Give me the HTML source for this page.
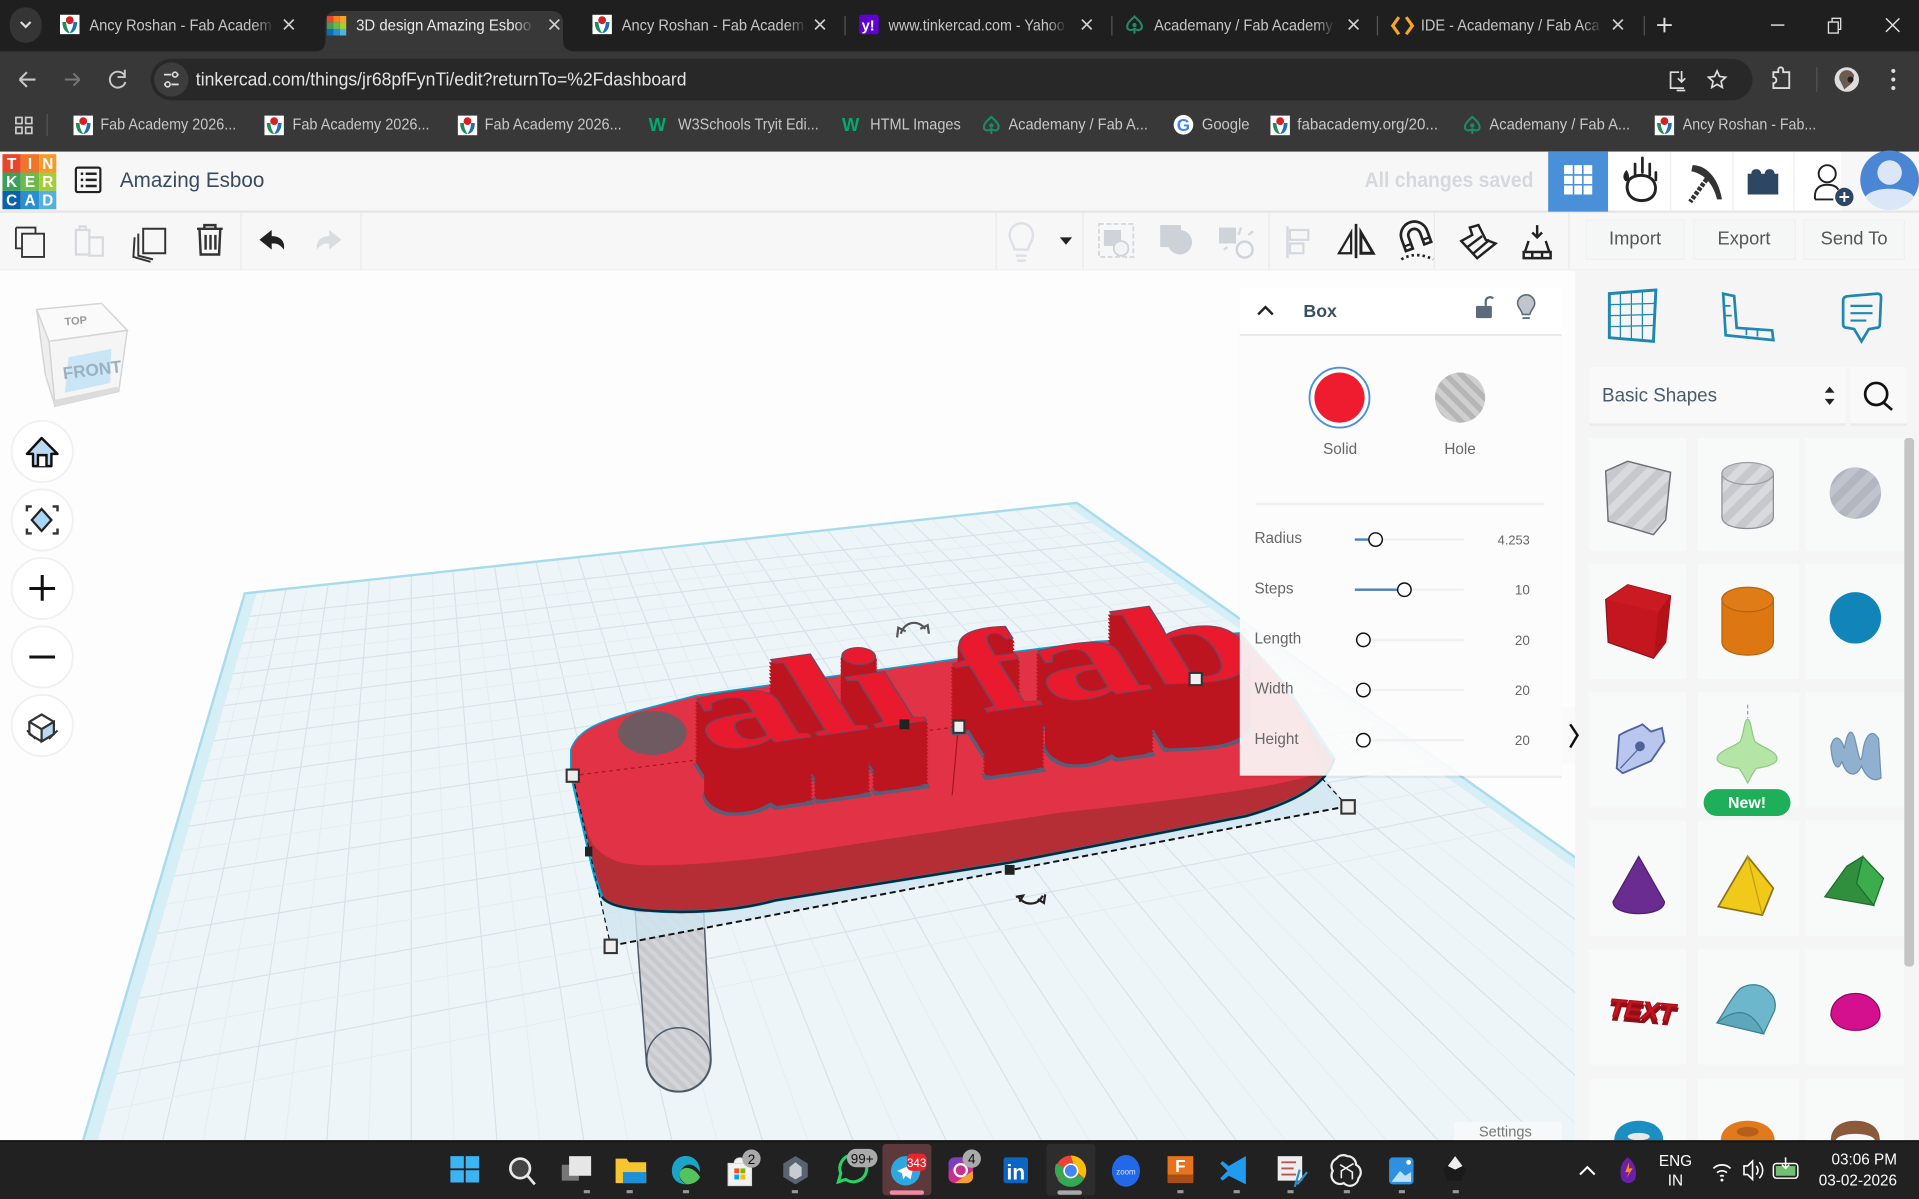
<!DOCTYPE html>
<html lang="en"><head><meta charset="utf-8"><title>3D design Amazing Esboo | Tinkercad</title>
<style>
html,body{margin:0;padding:0;background:#202020;overflow:hidden}
svg{display:block}
text{font-family:"Liberation Sans",sans-serif}
.tab{font-size:13px;fill:#c4c7c5}
.bm{font-size:12.5px;fill:#c7c7c7}
.x{stroke:#d0d0d0;stroke-width:1.4;fill:none}
.lab{font-size:12.5px;fill:#666}
.val{font-size:11px;fill:#666;text-anchor:end}
.btn{font-size:15px;fill:#555;text-anchor:middle}
.ic{fill:none;stroke:#222;stroke-width:2;stroke-linejoin:round;stroke-linecap:round}
.ext{font-family:"Liberation Serif",serif;font-weight:bold;font-size:100px;fill:#bd1520;stroke:#bd1520;stroke-width:1.5}
.nb{fill:#fff;stroke:#f0f0f0;stroke-width:1.5}
.cell{fill:#f8f9f9}
.tb{font-size:12.5px;fill:#fff}
</style></head><body>
<svg xmlns="http://www.w3.org/2000/svg" width="1919" height="1199" viewBox="0 0 1568 980" preserveAspectRatio="none">
<defs>
<symbol id="fab" viewBox="0 0 16 16"><rect width="16" height="16" fill="#fff"/><circle cx="8" cy="4.5" r="3.2" fill="#d32027"/><path d="M2 6C2 12 5 15 8 15C6 12 5 9 5 6Z" fill="#1f8a5a"/><path d="M14 6C14 12 11 15 8 15C10 12 11 9 11 6Z" fill="#1c6fb5"/></symbol>
<symbol id="aca" viewBox="0 0 16 16"><path d="M8 1C5 4 2 6 2 9.500C2 12 5 13 8 11C11 13 14 12 14 9.500C14 6 11 4 8 1Z M8 11V15" fill="none" stroke="#1d8a66" stroke-width="1.700"/><circle cx="8" cy="8" r="1.800" fill="#1d8a66"/></symbol>
<symbol id="tk" viewBox="0 0 15 15"><rect width="5" height="5" fill="#e8462a"/><rect x="5" width="5" height="5" fill="#f58220"/><rect x="10" width="5" height="5" fill="#f7a128"/><rect y="5" width="5" height="5" fill="#3f9f5a"/><rect x="5" y="5" width="5" height="5" fill="#6cba4a"/><rect x="10" y="5" width="5" height="5" fill="#a5cd39"/><rect y="10" width="5" height="5" fill="#0a6ebd"/><rect x="5" y="10" width="5" height="5" fill="#2a8fd0"/><rect x="10" y="10" width="5" height="5" fill="#55b0e0"/></symbol>
<pattern id="hs" width="13" height="13" patternUnits="userSpaceOnUse" patternTransform="rotate(45)"><rect width="13" height="13" fill="#c5c8cc"/><rect width="6.500" height="13" fill="#d8dadd"/></pattern>
<pattern id="hd" width="9" height="9" patternUnits="userSpaceOnUse" patternTransform="rotate(-45)"><rect width="9" height="9" fill="#b5b5b5"/><rect width="4.500" height="9" fill="#cfcfcf"/></pattern>
<pattern id="hc" width="7" height="7" patternUnits="userSpaceOnUse" patternTransform="rotate(-45)"><rect width="7" height="7" fill="#c6c8cc"/><rect width="3.500" height="7" fill="#d2d4d7"/></pattern>
<linearGradient id="fd"><stop offset="0" stop-color="#1f1f1f" stop-opacity="0"/><stop offset="1" stop-color="#1f1f1f"/></linearGradient>
<linearGradient id="fa"><stop offset="0" stop-color="#383838" stop-opacity="0"/><stop offset="1" stop-color="#383838"/></linearGradient>
<clipPath id="plane"><path d="M200 485L880 411L1614 932H68Z"/></clipPath>
<clipPath id="canvas"><rect x="0" y="221" width="1287" height="711"/></clipPath>
</defs>

<!-- browser chrome -->
<rect width="1568" height="42" fill="#1f1f1f"/>
<rect y="42" width="1568" height="82" fill="#383838"/>
<rect x="8" y="6" width="26" height="29" rx="13" fill="#353535"/>
<path d="M17 18l4 4 4-4" fill="none" stroke="#ddd" stroke-width="1.800"/>
<path d="M258 42C264 42 266 38 266 32V18C266 12 270 9 276 9H450C456 9 460 12 460 18V32C460 38 462 42 470 42Z" fill="#383838"/>

<use href="#fab" x="49" y="12" width="16" height="16"/>
<text x="73" y="25" class="tab" textLength="149" lengthAdjust="spacingAndGlyphs">Ancy Roshan - Fab Academ</text><rect x="208" y="12" width="16" height="18" fill="url(#fd)"/>
<path class="x" d="M232 16l8 8M240 16l-8 8"/>
<use href="#tk" x="267" y="13" width="16" height="16"/>
<text x="291" y="25" class="tab" style="fill:#e8e8e8" textLength="143" lengthAdjust="spacingAndGlyphs">3D design Amazing Esboo</text><rect x="420" y="12" width="16" height="18" fill="url(#fa)"/>
<path class="x" d="M449 16l8 8M457 16l-8 8"/>
<use href="#fab" x="484" y="12" width="16" height="16"/>
<text x="508" y="25" class="tab" textLength="149" lengthAdjust="spacingAndGlyphs">Ancy Roshan - Fab Academ</text><rect x="643" y="12" width="16" height="18" fill="url(#fd)"/>
<path class="x" d="M666 16l8 8M674 16l-8 8"/>
<rect x="690" y="13" width="1" height="16" fill="#555"/>
<rect x="702" y="12" width="16" height="16" rx="2" fill="#5f01d1"/><text x="704" y="25" style="font-size:12px;font-weight:bold;fill:#fff">y!</text>
<text x="726" y="25" class="tab" textLength="144" lengthAdjust="spacingAndGlyphs">www.tinkercad.com - Yahoo</text><rect x="856" y="12" width="16" height="18" fill="url(#fd)"/>
<path class="x" d="M884 16l8 8M892 16l-8 8"/>
<rect x="908" y="13" width="1" height="16" fill="#555"/>
<use href="#aca" x="919" y="12" width="16" height="17"/>
<text x="943" y="25" class="tab" textLength="146" lengthAdjust="spacingAndGlyphs">Academany / Fab Academy</text><rect x="1075" y="12" width="16" height="18" fill="url(#fd)"/>
<path class="x" d="M1102 16l8 8M1110 16l-8 8"/>
<rect x="1125" y="13" width="1" height="16" fill="#555"/>
<path d="M1143 14l-5 7 5 7M1149 14l5 7-5 7" fill="none" stroke="#f5a623" stroke-width="2.600"/>
<text x="1161" y="25" class="tab" textLength="146" lengthAdjust="spacingAndGlyphs">IDE - Academany / Fab Aca</text><rect x="1293" y="12" width="16" height="18" fill="url(#fd)"/>
<path class="x" d="M1318 16l8 8M1326 16l-8 8"/>
<rect x="1343" y="13" width="1" height="16" fill="#555"/>
<path d="M1354 20.500h12M1360 14.500v12" stroke="#ddd" stroke-width="1.600"/>
<path d="M1447 20.500h11" stroke="#ddd" stroke-width="1.200"/>
<path d="M1494 18h8v9h-8zM1497 18v-3h7v9h-2" fill="none" stroke="#ddd" stroke-width="1.100"/>
<path d="M1541 15l11 11M1552 15l-11 11" stroke="#ddd" stroke-width="1.200"/>

<path d="M16 65h13M16 65l6-6M16 65l6 6" stroke="#c7c7c7" stroke-width="1.700" fill="none"/>
<path d="M53 65h12M65 65l-5-5M65 65l-5 5" stroke="#777" stroke-width="1.600" fill="none"/>
<path d="M102 62a6.500 6.500 0 1 0 .5 5M102 57v6h-6" stroke="#c7c7c7" stroke-width="1.600" fill="none"/>
<rect x="123" y="48" width="1309" height="34" rx="17" fill="#282828"/>
<circle cx="140" cy="65" r="14" fill="#3d3d3d"/>
<path d="M134 61h6M145 61h1M134 69h1M140 69h6" stroke="#ddd" stroke-width="1.500"/><circle cx="143" cy="61" r="2" fill="none" stroke="#ddd" stroke-width="1.300"/><circle cx="137" cy="69" r="2" fill="none" stroke="#ddd" stroke-width="1.300"/>
<text x="160" y="70" style="font-size:15px;fill:#e4e4e4" textLength="401" lengthAdjust="spacingAndGlyphs">tinkercad.com/things/jr68pfFynTi/edit?returnTo=%2Fdashboard</text>
<path d="M1376 72h-11v-13h7M1370 74h7M1374 58v9M1371 64l3 3 3-3" fill="none" stroke="#ddd" stroke-width="1.400"/>
<path d="M1403 58l2 4.500 5 .6-3.700 3.400 1 5-4.300-2.500-4.300 2.500 1-5-3.700-3.400 5-.6z" fill="none" stroke="#ddd" stroke-width="1.400"/>
<path d="M1449 59h4v-2a2 2 0 0 1 4 0v2h5v13h-13v-4a2.500 2.500 0 0 0 0-5z" fill="none" stroke="#ddd" stroke-width="1.500"/>
<rect x="1484" y="55" width="1" height="20" fill="#555"/>
<circle cx="1509" cy="65" r="10" fill="#ddd"/><path d="M1503 65a6 6 0 0 1 12-3l-2 6-6 5z" fill="#6b5a50"/><circle cx="1512" cy="65" r="2.500" fill="#222"/>
<circle cx="1547" cy="58" r="1.700" fill="#ddd"/><circle cx="1547" cy="65" r="1.700" fill="#ddd"/><circle cx="1547" cy="72" r="1.700" fill="#ddd"/>

<path d="M13 96h5v5h-5zM21 96h5v5h-5zM13 104h5v5h-5zM21 104h5v5h-5z" fill="none" stroke="#ccc" stroke-width="1.400"/>
<rect x="38" y="93" width="1" height="18" fill="#555"/>
<use href="#fab" x="60" y="94" width="16" height="17"/><text x="82" y="106" class="bm" textLength="111" lengthAdjust="spacingAndGlyphs">Fab Academy 2026...</text>
<use href="#fab" x="216" y="94" width="16" height="17"/><text x="239" y="106" class="bm" textLength="112" lengthAdjust="spacingAndGlyphs">Fab Academy 2026...</text>
<use href="#fab" x="374" y="94" width="16" height="17"/><text x="396" y="106" class="bm" textLength="112" lengthAdjust="spacingAndGlyphs">Fab Academy 2026...</text>
<text x="530" y="107" style="font-size:15px;font-weight:bold;fill:#04aa6d">W</text><text x="554" y="106" class="bm" textLength="115" lengthAdjust="spacingAndGlyphs">W3Schools Tryit Edi...</text>
<text x="688" y="107" style="font-size:15px;font-weight:bold;fill:#04aa6d">W</text><text x="711" y="106" class="bm" textLength="74" lengthAdjust="spacingAndGlyphs">HTML Images</text>
<use href="#aca" x="802" y="94" width="16" height="17"/><text x="824" y="106" class="bm" textLength="114" lengthAdjust="spacingAndGlyphs">Academany / Fab A...</text>
<circle cx="967" cy="102" r="8" fill="#fff"/><text x="961.500" y="107" style="font-size:14px;font-weight:bold;fill:#4285f4">G</text><text x="982" y="106" class="bm" textLength="39" lengthAdjust="spacingAndGlyphs">Google</text>
<use href="#fab" x="1038" y="94" width="16" height="17"/><text x="1060" y="106" class="bm" textLength="115" lengthAdjust="spacingAndGlyphs">fabacademy.org/20...</text>
<use href="#aca" x="1195" y="94" width="16" height="17"/><text x="1217" y="106" class="bm" textLength="115" lengthAdjust="spacingAndGlyphs">Academany / Fab A...</text>
<use href="#fab" x="1352" y="94" width="16" height="17"/><text x="1375" y="106" class="bm" textLength="109" lengthAdjust="spacingAndGlyphs">Ancy Roshan - Fab...</text>

<!-- tinkercad header -->
<rect y="124" width="1568" height="808" fill="#fdfdfd"/>
<rect y="124" width="1568" height="48" fill="#f7f7f8"/>
<rect y="172" width="1568" height="2" fill="#e6e6e6"/>
<rect y="174" width="1568" height="47" fill="#f7f7f8"/>
<rect y="220" width="1568" height="1" fill="#eee"/>
<g style="font-size:12.500px;font-weight:bold;fill:#fff;text-anchor:middle">
<rect x="2" y="126" width="15" height="15" fill="#e8462a"/><text x="9.500" y="138">T</text>
<rect x="17" y="126" width="15" height="15" fill="#f0752a"/><text x="24.500" y="138">I</text>
<rect x="32" y="126" width="14" height="15" fill="#f79a2a"/><text x="39" y="138">N</text>
<rect x="2" y="141" width="15" height="15" fill="#3f9f5a"/><text x="9.500" y="153">K</text>
<rect x="17" y="141" width="15" height="15" fill="#6cba4a"/><text x="24.500" y="153">E</text>
<rect x="32" y="141" width="14" height="15" fill="#a5cd39"/><text x="39" y="153">R</text>
<rect x="2" y="156" width="15" height="15" fill="#0a62ad"/><text x="9.500" y="168">C</text>
<rect x="17" y="156" width="15" height="15" fill="#2a8fd0"/><text x="24.500" y="168">A</text>
<rect x="32" y="156" width="14" height="15" fill="#55b0e0"/><text x="39" y="168">D</text>
</g>
<rect x="62" y="137" width="20" height="20" rx="1.500" fill="none" stroke="#222" stroke-width="1.800"/>
<path d="M66 142h2M70 142h9M66 147h2M70 147h9M66 152h2M70 152h9" stroke="#222" stroke-width="2"/>
<text x="98" y="153" style="font-size:17px;fill:#3a4a5c" textLength="118" lengthAdjust="spacingAndGlyphs">Amazing Esboo</text>
<text x="1115" y="153" style="font-size:17px;font-weight:bold;fill:#d5d9dd" textLength="138" lengthAdjust="spacingAndGlyphs">All changes saved</text>
<rect x="1265" y="124" width="49" height="49" fill="#4a90d9"/>
<path d="M1278 135h23v24h-23z" fill="#fff"/><path d="M1285.700 135v24M1293.300 135v24M1278 143h23M1278 151h23" stroke="#4a90d9" stroke-width="1.300"/>
<rect x="1314" y="124" width="190" height="48" fill="#fff"/>
<path d="M1365 124v48M1416 124v48M1466 124v48" stroke="#eee"/>
<path d="M1331 147C1328 153 1329 163 1341 164C1352 164 1355 155 1351 148C1347 142 1336 142 1331 147Z" fill="none" stroke="#222" stroke-width="2.400"/>
<path d="M1336 142v-8M1342 141v-12M1348 143v-9M1353 147v-6" fill="none" stroke="#222" stroke-width="2.200" stroke-linecap="round"/><path d="M1328 148c-3-3-1-7 1-9 2 3 3 6 1 9z" fill="#222"/>
<path d="M1383 135C1394 135 1404 145 1407 163L1403 163C1400 150 1392 142 1382 140Z" fill="#333"/><path d="M1397 143L1381 165" stroke="#333" stroke-width="3.800" stroke-dasharray="3 1.200"/>
<path d="M1431 142c0-5 8-5 8 0h3c0-5 8-5 8 0h3v17h-25v-17z" fill="#2d4663"/>
<circle cx="1493" cy="142" r="7" fill="none" stroke="#222" stroke-width="1.600"/><path d="M1483 163v-3c0-6 4-9 10-9s8 2 9 4M1483 163h15" fill="none" stroke="#222" stroke-width="1.600"/>
<circle cx="1507" cy="161" r="7.500" fill="#2d4663"/><path d="M1503 161h8M1507 157v8" stroke="#fff" stroke-width="1.600"/>
<circle cx="1544" cy="147" r="24" fill="#4a86d4"/><circle cx="1544" cy="141" r="10" fill="#dbe7f7"/><path d="M1524 161c6-9 34-9 40 0a24 24 0 0 1-40 0Z" fill="#dbe7f7"/>

<!-- edit toolbar -->
<path d="M197 174v47M295 174v47M814 174v47M885 174v47M1037 174v47M1172 174v47M1282 174v47" stroke="#eaeaea"/>
<path d="M13 186h16v5M18 191h18v19H18zM13 186v17h5" fill="none" stroke="#333" stroke-width="1.500"/>
<path d="M62 188h11v20H62zM73 194h11v15H73zM65 188v-3h5v3" fill="none" stroke="#d6dade" stroke-width="1.800"/>
<path d="M117 187h18v20h-18zM113 191v18l12 3M110 194l-1 16 14 4" fill="none" stroke="#333" stroke-width="1.600"/>
<path d="M161 187h21M167 187v-3h9v3M163 187l1 21h15l1-21M168 192v12M172 192v12M176 192v12" fill="none" stroke="#333" stroke-width="2"/>
<path d="M212 196l10-8v5C230 193 233 198 232 204C228 199 226 199 222 199v5Z" fill="#222"/>
<path d="M279 196l-10-8v5C261 193 258 198 259 204C263 199 265 199 269 199v5Z" fill="#d9dde2"/>

<path d="M830 209h9M831 213h7M829 204C828 199 825 197 825 192A9.500 9.500 0 0 1 844 192C844 197 841 199 840 204Z" fill="none" stroke="#dde0e6" stroke-width="2"/>
<path d="M866 194h10l-5 6z" fill="#222"/>
<rect x="898" y="183" width="28" height="27" fill="none" stroke="#d5d8dc" stroke-width="1.500" stroke-dasharray="4 2"/><rect x="902" y="188" width="14" height="13" fill="#cfd4da"/><circle cx="916" cy="203" r="6" fill="#f2f3f4" stroke="#cfd4da" stroke-width="1.500"/>
<rect x="948" y="184" width="17" height="18" fill="#ccd2d8"/><circle cx="964" cy="198" r="10" fill="#ccd2d8"/>
<rect x="996" y="186" width="14" height="13" fill="#cfd4da"/><circle cx="1017" cy="204" r="6.500" fill="none" stroke="#cfd4da" stroke-width="2"/><path d="M1014 186l-2 6M1020 192l4-3M1000 204l3-2" stroke="#d5d8dc" stroke-width="2"/>
<path d="M1052 185v26" stroke="#d5d8dc" stroke-width="2"/><path d="M1054 188h15v8h-15zM1054 199h11v8h-11z" fill="none" stroke="#d5d8dc" stroke-width="1.800"/>
<path d="M1108 183v28" stroke="#222" stroke-width="2.200"/><path d="M1104 190v17h-10z" fill="none" stroke="#222" stroke-width="1.800"/><path d="M1112 190v17h10z" fill="none" stroke="#222" stroke-width="2.400"/>
<g transform="translate(1156,193) rotate(-20)"><path d="M-11 9V-1A11 11 0 0 1 11 -1V9H5V-1A5 5 0 0 0 -5 -1V9Z" fill="none" stroke="#222" stroke-width="2.200"/><path d="M-11 5h6M5 5h6" stroke="#222" stroke-width="1.800"/></g>
<path d="M1145 212q12-7 26 0" fill="none" stroke="#222" stroke-width="2.200" stroke-dasharray="2 2.500"/>
<path d="M1201 186l7-2 6 12 8 3-15 12-13-14 9-5zM1199 202l12-9M1204 207l13-11" fill="none" stroke="#222" stroke-width="2"/>
<path d="M1256 184v10M1252 190l4 4 4-4M1249 197l-3 9h20l-3-9M1245 206h22v5h-22zM1252 206v5M1260 206v5" fill="none" stroke="#222" stroke-width="2"/>

<rect x="1296" y="180" width="80" height="32" fill="#f5f6f6" stroke="#f0f0f0"/><text x="1336" y="200" class="btn">Import</text>
<rect x="1384" y="180" width="83" height="32" fill="#f5f6f6" stroke="#f0f0f0"/><text x="1425" y="200" class="btn">Export</text>
<rect x="1474" y="180" width="82" height="32" fill="#f5f6f6" stroke="#f0f0f0"/><text x="1515" y="200" class="btn">Send To</text>

<!-- work plane -->
<g clip-path="url(#canvas)">
<path d="M200 485L880 411L1614 932H68Z" fill="#eef5f9"/>
<g clip-path="url(#plane)">
<path fill="none" stroke="#e4edf2" stroke-width=".8" d="M336 25L100 932M336 25L166 932M336 25L233 932M336 25L301 932M336 25L371 932M336 25L441 932M336 25L513 932M336 25L586 932M336 25L660 932M336 25L735 932M336 25L812 932M336 25L890 932M336 25L970 932M336 25L1050 932M336 25L1133 932M336 25L1217 932M336 25L1302 932M336 25L1389 932M336 25L1478 932M336 25L1568 932"/>
<path fill="none" stroke="#d6e3ea" stroke-width="1" d="M336 25L133 932M336 25L200 932M336 25L267 932M336 25L336 932M336 25L406 932M336 25L477 932M336 25L549 932M336 25L623 932M336 25L697 932M336 25L773 932M336 25L851 932M336 25L930 932M336 25L1010 932M336 25L1091 932M336 25L1175 932M336 25L1259 932M336 25L1346 932M336 25L1433 932M336 25L1523 932"/>
<path fill="none" stroke="#d6e3ea" stroke-width="1" d="M4475 25L194 505M4475 25L188 527M4475 25L180 552M4475 25L173 578M4475 25L164 607M4475 25L154 640M4475 25L143 677M4475 25L131 718M4475 25L117 765M4475 25L102 818M4475 25L83 880"/>
<path fill="none" stroke="#e4edf2" stroke-width=".8" d="M4475 25L190 516M4475 25L184 540M4475 25L176 565M4475 25L168 592M4475 25L159 623M4475 25L148 658M4475 25L137 697M4475 25L124 741M4475 25L110 791M4475 25L92 849M4475 25L75 910"/>
<path d="M200 485L68 932H80L210 484Z" fill="#d6eef6"/>
<path d="M880 411L1614 932H1596L872 413Z" fill="#d6eef6"/>
</g>
<path d="M68 932L200 485L880 411L1300 710" fill="none" stroke="#a8dcec" stroke-width="2"/>

<!-- hole cylinder -->
<path d="M519 745L528 866A26 26 0 0 0 581 866L575 745Z" fill="url(#hc)" stroke="#4d5a6a" stroke-width="1.200"/>
<ellipse cx="554.500" cy="866" rx="26" ry="26" fill="url(#hc)" stroke="#4d5a6a" stroke-width="1.200"/>
<!-- projection shadow -->
<path d="M490 735L499 773L1101 659L1078 630Z" fill="#cfe6f0" opacity=".8"/>
<!-- base -->
<path d="M467 613C472 598 488 590 527 580L569 569L783 539L895 525L1013 518L1050 560L1090 620C1085 640 1060 655 1018 667L825 705L633 736C600 745 560 747 527 744C505 742 495 738 492 733C488 725 484 708 484 708L467 634Z" fill="#b52d35" stroke="#00a3d4" stroke-width="2.500"/>
<path d="M492 733C495 738 505 742 527 744C560 747 600 745 633 736L825 705L1018 667C1060 655 1085 640 1090 620" fill="none" stroke="#0c2a38" stroke-width="2"/>
<path d="M467 613C472 598 488 590 527 580L569 569L783 539L895 525L1013 518L1050 560L1082 630C1060 640 1000 650 868 664L633 700C600 704 540 710 513 706C498 704 484 695 480 680L467 634Z" fill="#e13345"/>
<ellipse cx="533" cy="599" rx="28" ry="18" fill="#6e5a60"/>
<path d="M468 634L783 594" stroke="#a8141f" stroke-width="1" stroke-dasharray="3 3"/>
<path d="M783 594L778 650" stroke="#a8141f" stroke-width="1"/>
<!-- extruded letters: real text layered -->
<g>
<text class="ext" style="stroke:#5a5d78;stroke-width:3" transform="translate(0,54) matrix(1.7,-.24,.56,.9,580,614)">ali fab</text>
<text class="ext" transform="translate(0,51) matrix(1.7,-.24,.56,.9,580,614)">ali fab</text>
<text class="ext" transform="translate(0,48) matrix(1.7,-.24,.56,.9,580,614)">ali fab</text>
<text class="ext" transform="translate(0,45) matrix(1.7,-.24,.56,.9,580,614)">ali fab</text>
<text class="ext" transform="translate(0,42) matrix(1.7,-.24,.56,.9,580,614)">ali fab</text>
<text class="ext" transform="translate(0,39) matrix(1.7,-.24,.56,.9,580,614)">ali fab</text>
<text class="ext" transform="translate(0,36) matrix(1.7,-.24,.56,.9,580,614)">ali fab</text>
<text class="ext" transform="translate(0,33) matrix(1.7,-.24,.56,.9,580,614)">ali fab</text>
<text class="ext" transform="translate(0,30) matrix(1.7,-.24,.56,.9,580,614)">ali fab</text>
<text class="ext" transform="translate(0,27) matrix(1.7,-.24,.56,.9,580,614)">ali fab</text>
<text class="ext" transform="translate(0,24) matrix(1.7,-.24,.56,.9,580,614)">ali fab</text>
<text class="ext" transform="translate(0,21) matrix(1.7,-.24,.56,.9,580,614)">ali fab</text>
<text class="ext" transform="translate(0,18) matrix(1.7,-.24,.56,.9,580,614)">ali fab</text>
<text class="ext" transform="translate(0,15) matrix(1.7,-.24,.56,.9,580,614)">ali fab</text>
<text class="ext" transform="translate(0,12) matrix(1.7,-.24,.56,.9,580,614)">ali fab</text>
<text class="ext" transform="translate(0,9) matrix(1.7,-.24,.56,.9,580,614)">ali fab</text>
<text class="ext" transform="translate(0,6) matrix(1.7,-.24,.56,.9,580,614)">ali fab</text>
<text class="ext" transform="translate(0,3) matrix(1.7,-.24,.56,.9,580,614)">ali fab</text>
<text class="ext" style="fill:#ea1a2e;stroke:#6a4a60;stroke-width:.8" transform="matrix(1.7,-.24,.56,.9,580,614)">ali fab</text>
</g>
<!-- selection -->
<path d="M499 773L1101 659" stroke="#111" stroke-width="1.600" stroke-dasharray="5 3"/>
<path d="M468 634L499 773" stroke="#111" stroke-width="1" stroke-dasharray="4 3"/>
<path d="M1080 636L1101 659" stroke="#111" stroke-width="1" stroke-dasharray="4 3"/>
<g fill="#eee" stroke="#333" stroke-width="1.700">
<rect x="463" y="629" width="10" height="10"/><rect x="1096" y="654" width="11" height="11"/><rect x="494" y="768" width="10" height="11"/><rect x="779" y="589" width="9" height="10"/><rect x="972" y="550" width="10" height="10"/>
</g>
<rect x="821" y="707" width="8" height="8" fill="#222"/><rect x="735" y="588" width="8" height="8" fill="#222"/><rect x="478" y="692" width="6" height="8" fill="#222"/>
<path d="M736 518C739 508 750 506 756 514M733 521l1-8 6 3M759 518l-1-7-6 3" fill="none" stroke="#555" stroke-width="1.800"/>
<path d="M832 733C838 741 848 740 852 732M830 733l6-1-3 5M854 731l-1 7-5-3" fill="none" stroke="#222" stroke-width="1.800"/>
</g>

<!-- view cube -->
<path d="M30 253L83 248L104 270L40 279Z" fill="#fafafa" stroke="#d5d5d5" stroke-width="1.200"/>
<path d="M40 279L104 270L97 320L45 332Z" fill="#f5f5f5" stroke="#d5d5d5" stroke-width="1.200"/>
<path d="M30 253L40 279L45 332L37 306Z" fill="#eee" stroke="#d5d5d5" stroke-width="1.200"/>
<path d="M45 332L97 320L96 316L44 327Z" fill="#dcdcdc"/>
<path d="M56 292L91 285L90 313L53 321Z" fill="#c9e5f6"/>
<text transform="translate(53,266) rotate(-5)" style="font-size:9px;font-weight:bold;fill:#9a9a9a">TOP</text>
<text transform="translate(52,310) rotate(-7)" style="font-size:14px;font-weight:bold;fill:#9db0bf">FRONT</text>

<circle class="nb" cx="34.500" cy="369" r="25"/><circle class="nb" cx="34.500" cy="425" r="25"/><circle class="nb" cx="34.500" cy="481" r="25"/><circle class="nb" cx="34.500" cy="537" r="25"/><circle class="nb" cx="34.500" cy="593" r="25"/>
<path d="M22 371L34 358L47 371H42V381H27V371Z" fill="#bcd9f3" stroke="#111" stroke-width="2" stroke-linejoin="round"/><path d="M31 381v-9h7v9" fill="#fff" stroke="#111" stroke-width="2"/>
<path d="M34 416L42 425L34 434L26 425Z" fill="#a9d6f7" stroke="#222" stroke-width="1.800"/>
<path d="M22 418v-4h4M43 414h4v4M47 432v4h-4M26 436h-4v-4" fill="none" stroke="#333" stroke-width="2"/>
<path d="M24 481h21M34.500 470v21" stroke="#111" stroke-width="2.500"/>
<path d="M24 537h21" stroke="#111" stroke-width="2.500"/>
<path d="M34 584L44 590V600L34 606L24 600V590ZM24 590L34 596L44 590M34 596V606" fill="#fff" stroke="#333" stroke-width="1.800" stroke-linejoin="round"/><path d="M34 596L44 590V600L34 606Z" fill="#b9daf3" stroke="#333" stroke-width="1.800"/><path d="M22 597l7 7M47 597l-7 7" stroke="#333" stroke-width="1.600"/>

<!-- right shapes panel -->
<rect x="1287" y="221" width="281" height="711" fill="#f5f5f6"/>
<path d="M1315 240L1353 237L1351 279L1315 276Z" fill="none" stroke="#1e88b0" stroke-width="2.400"/>
<path d="M1316 249l36-1M1316 258l36-1M1316 267l35-1M1324 240v37M1333 239v38M1342 239v39" stroke="#1e88b0" stroke-width="1"/>
<path d="M1408 240L1417 242L1419 268L1448 270L1449 278L1410 274Z" fill="none" stroke="#1e88b0" stroke-width="2.200"/>
<path d="M1409 250h5M1410 258h5M1427 269v5M1436 270v5" stroke="#1e88b0" stroke-width="1.400"/>
<path d="M1511 242L1534 240Q1537 240 1537 243L1536 265Q1536 268 1533 268L1527 269L1521 279L1515 269L1510 268Q1506 268 1506 265L1506 246Q1506 242 1511 242Z" fill="none" stroke="#1e88b0" stroke-width="2.200"/>
<path d="M1512 250h18M1512 256h18M1512 262h13" stroke="#1e88b0" stroke-width="1.800"/>

<rect x="1299" y="300" width="209" height="47" fill="#f9f9fa"/><path d="M1299 347h209" stroke="#eaeaea" stroke-width="2"/>
<text x="1309" y="328" style="font-size:15.500px;fill:#4b5b6a" textLength="94" lengthAdjust="spacingAndGlyphs">Basic Shapes</text>
<path d="M1491 321l4-5 4 5zM1491 326l4 5 4-5z" fill="#222"/>
<rect x="1512" y="300" width="46" height="47" fill="#f9f9fa"/><path d="M1512 347h46" stroke="#eaeaea" stroke-width="2"/>
<circle cx="1533" cy="322" r="9" fill="none" stroke="#111" stroke-width="2.200"/><path d="M1539 329l7 6" stroke="#111" stroke-width="2.200"/>

<g class="cellg">
<rect class="cell" x="1298" y="358" width="80" height="92"/><rect class="cell" x="1387" y="358" width="83" height="92"/><rect class="cell" x="1475" y="358" width="81" height="92"/>
<rect class="cell" x="1298" y="461" width="80" height="94"/><rect class="cell" x="1387" y="461" width="83" height="94"/><rect class="cell" x="1475" y="461" width="81" height="94"/>
<rect class="cell" x="1298" y="566" width="80" height="94"/><rect class="cell" x="1387" y="566" width="83" height="94"/><rect class="cell" x="1475" y="566" width="81" height="94"/>
<rect class="cell" x="1298" y="671" width="80" height="94"/><rect class="cell" x="1387" y="671" width="83" height="94"/><rect class="cell" x="1475" y="671" width="81" height="94"/>
<rect class="cell" x="1298" y="776" width="80" height="94"/><rect class="cell" x="1387" y="776" width="83" height="94"/><rect class="cell" x="1475" y="776" width="81" height="94"/>
<rect class="cell" x="1298" y="882" width="80" height="50"/><rect class="cell" x="1387" y="882" width="83" height="50"/><rect class="cell" x="1475" y="882" width="81" height="50"/>
</g>
<rect x="1556" y="358" width="8" height="432" rx="3" fill="#c4c4c4"/>

<path d="M1312 385L1330 377L1365 386L1361 425L1351 437L1314 426Z" fill="url(#hs)" stroke="#6d6f75" stroke-width="1.200"/>
<path d="M1407 387V423C1408 435 1447 435 1449 423V387Z" fill="url(#hs)" stroke="#8a8d93" stroke-width="1"/><ellipse cx="1428" cy="387" rx="21" ry="9" fill="url(#hs)" stroke="#9a9da3"/>
<circle cx="1516" cy="403" r="21" fill="url(#hs)"/><circle cx="1516" cy="403" r="21" fill="#6a6e90" opacity=".2"/>

<path d="M1312 490L1330 478L1365 487L1361 525L1351 538L1314 525Z" fill="#c4161f" stroke="#8a1015"/><path d="M1312 490L1330 478L1365 487L1355 500Z" fill="#ca1a22"/><path d="M1355 500L1365 487L1361 525L1351 538Z" fill="#b51119"/>
<path d="M1407 490V525C1408 539 1448 539 1449 525V490Z" fill="#dd7711" stroke="#b56510"/><ellipse cx="1428" cy="490" rx="21" ry="10" fill="#e07c18" stroke="#b56510"/>
<circle cx="1516" cy="505" r="21" fill="#1185b8"/>

<path d="M1323 601C1331 596 1337 595 1342 592L1349 598L1358 595L1360 606L1349 622L1326 632L1321 628Z" fill="#b9c6ee" stroke="#51629a" stroke-width="1.500"/><circle cx="1340" cy="610" r="4" fill="#51629a"/><path d="M1324 628L1338 613" stroke="#51629a"/>
<path d="M1428 576v11" stroke="#9b8fc9" stroke-width="1" stroke-dasharray="3 2"/>
<path d="M1428 588C1431 588 1431 600 1434 606C1438 610 1452 614 1452 620C1452 625 1442 627 1435 628C1432 632 1430 636 1428 640C1426 636 1424 632 1421 628C1414 627 1403 625 1403 620C1403 614 1418 610 1422 606C1425 600 1425 588 1428 588Z" fill="#b5e5a6" stroke="#8ec985"/>
<rect x="1392" y="645" width="71" height="22" rx="11" fill="#1fae5a"/><text x="1427.500" y="660.500" style="font-size:13px;font-weight:bold;fill:#fff;text-anchor:middle">New!</text>
<path d="M1496 610C1499 598 1505 604 1507 612C1509 600 1512 594 1515 602C1518 612 1520 630 1522 615C1524 600 1530 595 1535 604L1537 636C1530 640 1524 634 1521 626C1516 638 1507 632 1505 622C1502 632 1497 626 1496 610Z" fill="#8fb0cf" stroke="#6f91b2"/>

<path d="M1339 700L1318 737C1318 750 1360 750 1360 737Z" fill="#6a2c90" stroke="#4a1f68"/>
<path d="M1428 700L1404 741L1440 748L1449 726Z" fill="#f0c91b" stroke="#8a7415" stroke-width="1.400"/><path d="M1428 700L1440 748" stroke="#bda010" stroke-width="1"/>
<path d="M1491 733L1509 708L1522 700L1517 722L1531 740Z" fill="#2f8f3d" stroke="#206d2e" stroke-width="1"/><path d="M1522 700L1539 718L1531 740L1517 722Z" fill="#3bad4d" stroke="#206d2e" stroke-width="1"/>

<g transform="translate(1313,830) rotate(5) skewX(-12)" style="font-size:20px;font-weight:bold;font-family:'Liberation Sans',sans-serif">
<text x="1" y="3" style="fill:#8d0f18;stroke:#8d0f18;stroke-width:1.500" textLength="54" lengthAdjust="spacingAndGlyphs">TEXT</text>
<text style="fill:#c8141f;stroke:#a8111a;stroke-width:1" textLength="54" lengthAdjust="spacingAndGlyphs">TEXT</text></g>
<path d="M1403 836C1410 825 1415 815 1422 808C1430 803 1440 804 1446 811C1451 816 1451 822 1450 826L1441 845Z" fill="#6cb7cb" stroke="#3f7f93"/><path d="M1403 836C1420 822 1432 826 1441 845Z" fill="#5da7bb" stroke="#3f7f93"/>
<path d="M1496 830C1496 818 1506 812 1516 812C1527 812 1537 820 1536 831C1533 845 1500 847 1496 830Z" fill="#d5108f" stroke="#8a0a5e"/>

<path d="M1319 932C1319 922 1328 916 1339 916C1350 916 1359 922 1359 932Z" fill="#1b8ec2"/><ellipse cx="1339" cy="929" rx="9" ry="3" fill="#e8e8e8"/>
<path d="M1406 932C1406 922 1416 916 1428 916C1440 916 1450 922 1450 932Z" fill="#e07a1c"/><ellipse cx="1428" cy="925" rx="9" ry="4" fill="#b5601a"/>
<path d="M1496 932C1496 921 1505 916 1516 916C1527 916 1536 921 1536 932H1532C1530 925 1502 925 1500 932Z" fill="#8a5a3a"/>

<rect x="1188" y="917" width="88" height="15" fill="#f7f8f9"/>
<text x="1230" y="929" style="font-size:12px;fill:#777;text-anchor:middle">Settings</text>

<!-- inspector -->
<rect x="1013" y="236" width="263" height="398" fill="#000" opacity=".06" transform="translate(0,2)"/>
<rect x="1013" y="236" width="263" height="398" fill="#fdfdfd" fill-opacity=".9"/>
<rect x="1013" y="236" width="263" height="37" fill="#fff"/>
<rect x="1013" y="273" width="263" height="1.500" fill="#e8e8e8"/>
<path d="M1028 257l6-6 6 6" fill="none" stroke="#222" stroke-width="2"/>
<text x="1065" y="259" style="font-size:14.500px;font-weight:bold;fill:#3a4f63">Box</text>
<rect x="1206" y="250" width="13" height="10" rx="1" fill="#5c6b7b"/><path d="M1214 250v-4a3.500 3.500 0 0 1 6-2" fill="none" stroke="#5c6b7b" stroke-width="1.800"/>
<path d="M1244 257C1243 253 1240 251 1240 248A7 7 0 0 1 1254 248C1254 251 1251 253 1250 257Z" fill="#c0c6cc" stroke="#5c6b7b" stroke-width="1.300"/><path d="M1244 260h6" stroke="#5c6b7b" stroke-width="1.500"/>
<circle cx="1094.500" cy="325" r="24.500" fill="#fff" stroke="#4a90d9" stroke-width="1.500"/><circle cx="1094.500" cy="325" r="20.500" fill="#ee1c2e"/>
<circle cx="1193" cy="325" r="20.500" fill="url(#hd)"/>
<text x="1095" y="371" class="lab" style="text-anchor:middle">Solid</text><text x="1193" y="371" class="lab" style="text-anchor:middle">Hole</text>
<rect x="1026" y="411" width="236" height="2" fill="#f1f1f1"/>
<g>
<text x="1025" y="444" class="lab">Radius</text><text x="1025" y="485" class="lab">Steps</text><text x="1025" y="526" class="lab">Length</text><text x="1025" y="567" class="lab">Width</text><text x="1025" y="608" class="lab">Height</text>
<path d="M1107 441h89M1107 482h89M1107 523h89M1107 564h89M1107 605h89" stroke="#f0f0f0" stroke-width="2"/>
<path d="M1107 441h12M1107 482h36" stroke="#4a80c4" stroke-width="2"/>
<g fill="#fff" stroke="#111" stroke-width="1.200"><circle cx="1124" cy="441" r="5.500"/><circle cx="1147.500" cy="482" r="5.500"/><circle cx="1114" cy="523" r="5.500"/><circle cx="1114" cy="564" r="5.500"/><circle cx="1114" cy="605" r="5.500"/></g>
<text x="1250" y="445" class="val" style="font-size:10.500px">4.253</text><text x="1250" y="486" class="val">10</text><text x="1250" y="527" class="val">20</text><text x="1250" y="568" class="val">20</text><text x="1250" y="609" class="val">20</text>
</g>
<rect x="1276" y="578" width="11" height="46" fill="#fafafa"/>
<path d="M1283 592l6 9-6 10" fill="none" stroke="#111" stroke-width="2"/>

<!-- taskbar -->
<rect y="932" width="1568" height="48" fill="#212121"/>
<rect y="932" width="1568" height="1.500" fill="#161616"/>
<g>
<path d="M368 945h11v10h-11zM380.500 945h11v10h-11zM368 956.500h11v10h-11zM380.500 956.500h11v10h-11z" fill="#3db4f2"/>
<circle cx="425" cy="955" r="8" fill="#444" stroke="#e8e8e8" stroke-width="2.200"/><path d="M431 961l6 7" stroke="#e8e8e8" stroke-width="2.200"/>
<rect x="459" y="952" width="14" height="13" fill="#777"/><rect x="465" y="945" width="18" height="16" fill="#e6e6e6"/>
<path d="M503 947h9l2 3h14v17h-25z" fill="#f7c52d"/><rect x="509" y="958" width="19" height="9" fill="#1e90d8"/>
<path d="M549 957C549 948 556 944 562 945C569 946 572 952 572 958C567 950 560 950 556 957C554 962 556 966 561 968C554 968 549 964 549 957Z" fill="#1aa4c8"/><path d="M556 957C560 952 568 955 572 962C570 966 566 968 561 968C556 965 554 961 556 957Z" fill="#54c35c"/>
<path d="M595 951h19v18h-19zM600 951c0-6 9-6 9 0" fill="#f2f2f2" stroke="#ddd"/><rect x="600" y="955" width="4" height="4" fill="#f25022"/><rect x="605" y="955" width="4" height="4" fill="#7fba00"/><rect x="600" y="960" width="4" height="4" fill="#00a4ef"/><rect x="605" y="960" width="4" height="4" fill="#ffb900"/>
<circle cx="614" cy="947" r="7.500" fill="#aaa"/><text x="614" y="951.500" style="font-size:11px;fill:#111;text-anchor:middle">2</text>
<path d="M650 945l10 6v11l-10 6-10-6v-11z" fill="#5a6470"/><path d="M650 950l5 4v7l-5 3-5-3v-7z" fill="#c7ccd2"/>
<path d="M685 966l2-7A11 11 0 1 1 691 964Z" fill="none" stroke="#25d366" stroke-width="2.500"/>
<rect x="692" y="939" width="25" height="15" rx="7.500" fill="#aaa"/><text x="704.500" y="951" style="font-size:11px;fill:#111;text-anchor:middle">99+</text>
<rect x="721" y="935" width="40" height="42" rx="3" fill="#5c3a3c"/>
<circle cx="740" cy="957" r="12" fill="#2ea6df"/><path d="M733 957l14-6-3 13-4-3-2 3-1-5z" fill="#fff"/>
<rect x="741" y="943" width="16" height="14" rx="4" fill="#e8242f"/><text x="749" y="954" style="font-size:9.500px;fill:#fff;text-anchor:middle">343</text>
<rect x="727" y="973" width="28" height="3.500" rx="1.700" fill="#f08aa0"/>
<rect x="775" y="946" width="20" height="21" rx="5" fill="#c7308f"/><path d="M775 951a5 5 0 0 1 5-5h8l-13 12z" fill="#7b3fbe"/><path d="M795 962a5 5 0 0 1-5 5h-10l15-10z" fill="#f5a02a"/><circle cx="785" cy="956.500" r="5" fill="none" stroke="#fff" stroke-width="1.800"/>
<circle cx="794" cy="947" r="7.500" fill="#aaa"/><text x="794" y="951" style="font-size:11px;fill:#111;text-anchor:middle">4</text>
<rect x="820" y="946" width="20" height="21" rx="2" fill="#0a66c2"/><text x="830" y="964" style="font-size:17px;font-weight:bold;fill:#fff;text-anchor:middle">in</text>
<rect x="855" y="935" width="40" height="42" rx="3" fill="#2d2d2d"/>
<circle cx="875" cy="957" r="12.500" fill="#ea4335"/><path d="M875 957l11 6a12.500 12.500 0 0 1-22 1z" fill="#34a853"/><path d="M875 957l-11 6a12.500 12.500 0 0 1-1-12z" fill="#34a853"/><path d="M875 944.500a12.500 12.500 0 0 1 11 18.500l-7-6z" fill="#fbbc04"/><circle cx="875" cy="957" r="5.500" fill="#4285f4" stroke="#fff" stroke-width="1.300"/>
<rect x="864" y="973" width="20" height="3.500" rx="1.700" fill="#aaa"/>
<ellipse cx="920" cy="957" rx="11.500" ry="13" fill="#2268e8"/><text x="920" y="960" style="font-size:6.500px;fill:#dbe8ff;text-anchor:middle">zoom</text>
<path d="M954 945h21v20h-21z" fill="#e8731c"/><rect x="954" y="960" width="21" height="7" fill="#a84f14"/><text x="964.500" y="958" style="font-size:14px;font-weight:bold;fill:#fff;text-anchor:middle">F</text>
<path d="M1018 945v23l-14-7-5 4-2-2 6-6-6-6 2-2 5 4z" fill="#1f9cf0"/>
<rect x="1044" y="945" width="20" height="20" fill="#eee"/><path d="M1047 950h12M1047 955h10M1047 960h12" stroke="#b55" stroke-width="1.500"/><path d="M1062 956l-4 14M1068 958l-8 10" stroke="#2f8fd0" stroke-width="1.800"/>
<path d="M1101 945a7 7 0 0 1 7 7 7 7 0 0 1 2 11 7 7 0 0 1-12 4 7 7 0 0 1-9-10 7 7 0 0 1 3-10 7 7 0 0 1 9-2Z" fill="none" stroke="#eee" stroke-width="1.800"/><path d="M1095 952l10 6v6M1106 951l-10 6v6" fill="none" stroke="#eee" stroke-width="1.300"/>
<rect x="1135" y="946" width="20" height="22" rx="3" fill="#2e90de"/><path d="M1137 966l7-9 4 4 5-3v8z" fill="#bfe3ff"/><circle cx="1151" cy="950" r="2" fill="#fff"/>
<path d="M1189 945l9 11-4 9h-11l-4-9z" fill="#1a1a1a"/><path d="M1189 945l6 8-6 3-6-3z" fill="#eee"/>
<path d="M477 974h5M512 974h5M558 974h5M647 974h5M962 974h5M1008 974h5M1052 974h5M1098 974h5M1143 974h5M1187 974h5" stroke="#999" stroke-width="2.500"/>
<path d="M1291 960l6-6 6 6" fill="none" stroke="#fff" stroke-width="1.700"/>
<path d="M1330 946C1324 950 1323 958 1325 964C1328 968 1333 968 1336 964C1338 958 1336 950 1330 946Z" fill="#6c1fa8"/><path d="M1331 950l-3 8h3l-2 5 5-8h-3z" fill="#ff8a1e"/>
<text x="1369" y="953" class="tb" style="text-anchor:middle">ENG</text><text x="1369" y="969" class="tb" style="text-anchor:middle">IN</text>
<path d="M1400 955a10 10 0 0 1 14 0M1403 958.500a6 6 0 0 1 8 0M1405.500 961.500a2.500 2.500 0 0 1 3 0" fill="none" stroke="#fff" stroke-width="1.400"/><circle cx="1407" cy="964.500" r="1.200" fill="#fff"/>
<path d="M1425 953h3l4-4v15l-4-4h-3zM1435 953a5 5 0 0 1 0 7M1437.500 950a9 9 0 0 1 0 13" fill="none" stroke="#fff" stroke-width="1.300"/>
<rect x="1449" y="951" width="20" height="12" rx="2.500" fill="none" stroke="#fff" stroke-width="1.200"/><rect x="1451" y="953" width="16" height="8" fill="#6fc16f"/><path d="M1459 946v9M1456 952l3 3 3-3" fill="none" stroke="#fff" stroke-width="1.300"/>
<text x="1550" y="952" class="tb" style="text-anchor:end">03:06 PM</text><text x="1550" y="969" class="tb" style="text-anchor:end">03-02-2026</text>
</g>
</svg>
</body></html>
